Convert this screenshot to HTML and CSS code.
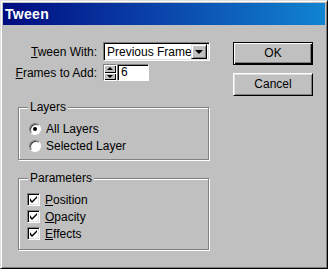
FILE: index.html
```html
<!DOCTYPE html>
<html lang="en">
<head>
    <meta charset="UTF-8">
    <title>Tween</title>
    <link rel="stylesheet" href="styles.css">
</head>
<body>
<div class="dlg">
    <div class="title">Tween</div>
    <div class="body">
        <div class="left">
            <div class="fields">
                <label class="lbl"><u>T</u>ween With:</label>
                <div class="combo">
                    <span class="combo-text">Previous Frame</span>
                    <span class="drop"><i class="tri-down"></i></span>
                </div>
                <label class="lbl"><u>F</u>rames to Add:</label>
                <div class="spin">
                    <div class="spin-btns">
                        <span class="sbtn"><i class="tri-up-s"></i></span>
                        <span class="sbtn"><i class="tri-down-s"></i></span>
                    </div>
                    <div class="num">6</div>
                </div>
            </div>

            <div class="group layers">
                <span class="group-title">Layers</span>
                <div class="opt"><span class="radio on"></span>All Layers</div>
                <div class="opt"><span class="radio"></span>Selected Layer</div>
            </div>

            <div class="group params">
                <span class="group-title">Parameters</span>
                <div class="opt"><span class="check"><svg width="7" height="7" viewBox="0 0 7 7"><path d="M0 2v3l2 2 5-5V0L2 5z" fill="#000"/></svg></span><u>P</u>osition</div>
                <div class="opt"><span class="check"><svg width="7" height="7" viewBox="0 0 7 7"><path d="M0 2v3l2 2 5-5V0L2 5z" fill="#000"/></svg></span><u>O</u>pacity</div>
                <div class="opt"><span class="check"><svg width="7" height="7" viewBox="0 0 7 7"><path d="M0 2v3l2 2 5-5V0L2 5z" fill="#000"/></svg></span><u>E</u>ffects</div>
            </div>
        </div>
        <div class="right">
            <div class="btn def">OK</div>
            <div class="btn">Cancel</div>
        </div>
    </div>
</div>
</body>
</html>
```

FILE: styles.css
```css
*{
    margin: 0;
    padding: 0;
    box-sizing: border-box;
}
body{
    background: #c0c0c0;
    font-family: "Liberation Sans", Arial, sans-serif;
    font-size: 12px;
    color: #000;
}
.dlg{
    width: 328px;
    height: 269px;
    padding: 2px;
    background: #c0c0c0;
    border: 1px solid;
    border-color: #dfdfdf #000 #000 #dfdfdf;
    box-shadow: inset 1px 1px #fff, inset -1px -1px #808080;
}
.title{
    height: 22px;
    line-height: 22px;
    padding-left: 2px;
    color: #fff;
    font-weight: bold;
    font-size: 14px;
    letter-spacing: 0.3px;
    background: linear-gradient(to right, #000c80 0%, #0a40a8 45%, #1084d0 100%);
}
.body{
    display: flex;
    padding: 17px 0 0 15px;
}
.left{
    width: 193px;
}
.fields{
    display: grid;
    grid-template-columns: 88px auto;
    row-gap: 3px;
    align-items: center;
    margin-left: -3px;
}
.lbl{
    text-align: right;
    padding-right: 6px;
    white-space: nowrap;
}
.combo{
    width: 107px;
    height: 19px;
    display: flex;
    align-items: center;
    background: #fff;
    border: 1px solid;
    border-color: #808080 #fff #fff #808080;
    box-shadow: inset 1px 1px #000, inset -1px -1px #dfdfdf;
    padding: 2px;
    overflow: hidden;
}
.combo-text{
    flex: 1;
    padding-left: 1px;
    white-space: nowrap;
    overflow: hidden;
    font-size: 12px;
}
.drop{
    width: 16px;
    height: 15px;
    flex: none;
    display: flex;
    align-items: center;
    justify-content: center;
    background: #c0c0c0;
    border: 1px solid;
    border-color: #dfdfdf #000 #000 #dfdfdf;
    box-shadow: inset 1px 1px #fff, inset -1px -1px #808080;
}
.tri-down{
    width: 0;
    height: 0;
    border-left: 4px solid transparent;
    border-right: 4px solid transparent;
    border-top: 4px solid #000;
}
.spin{
    display: flex;
    height: 17px;
}
.spin-btns{
    width: 14px;
    display: flex;
    flex-direction: column;
    border: 1px solid;
    border-color: #808080 #fff #fff #808080;
}
.sbtn{
    flex: 1;
    display: flex;
    align-items: center;
    justify-content: center;
    background: #c0c0c0;
    box-shadow: inset 1px 1px #fff, inset -1px -1px #000;
}
.tri-up-s{
    border-left: 3px solid transparent;
    border-right: 3px solid transparent;
    border-bottom: 3px solid #000;
}
.tri-down-s{
    border-left: 3px solid transparent;
    border-right: 3px solid transparent;
    border-top: 3px solid #000;
}
.num{
    width: 32px;
    background: #fff;
    border: 1px solid;
    border-color: #808080 #fff #fff #808080;
    box-shadow: inset 1px 1px #000;
    padding-left: 3px;
    line-height: 15px;
}
.group{
    position: relative;
    width: 191px;
    border: 1px solid #808080;
    box-shadow: 1px 1px 0 #fff, inset 1px 1px 0 #fff;
}
.group-title{
    position: absolute;
    left: 9px;
    top: -8px;
    padding: 0 2px;
    line-height: 14px;
    background: #c0c0c0;
}
.layers{
    margin-top: 26px;
    height: 53px;
    padding: 12px 0 0 9px;
}
.params{
    margin-top: 18px;
    height: 72px;
    padding: 12px 0 0 8px;
}
.opt{
    display: flex;
    align-items: center;
    height: 17px;
}
.radio{
    width: 12px;
    height: 12px;
    margin-right: 5px;
    border-radius: 50%;
    background: #fff;
    border: 1px solid;
    border-color: #808080 #fff #fff #808080;
    box-shadow: inset 1px 1px #404040;
    display: flex;
    align-items: center;
    justify-content: center;
}
.layers .opt{
    padding-left: 1px;
}
.radio.on::after{
    content: "";
    width: 4px;
    height: 4px;
    border-radius: 50%;
    background: #000;
}
.check{
    width: 13px;
    height: 13px;
    margin-right: 5px;
    background: #fff;
    border: 1px solid;
    border-color: #808080 #fff #fff #808080;
    box-shadow: inset 1px 1px #000, inset -1px -1px #dfdfdf;
    display: flex;
    align-items: center;
    justify-content: center;
}
.right{
    margin-left: 22px;
}
.btn{
    width: 80px;
    height: 23px;
    line-height: 21px;
    text-align: center;
    background: #c0c0c0;
    border: 1px solid;
    border-color: #fff #000 #000 #fff;
    box-shadow: inset 1px 1px #dfdfdf, inset -1px -1px #808080;
    margin-bottom: 8px;
}
.btn.def{
    border-color: #000;
    box-shadow: inset 1px 1px #fff, inset -1px -1px #000, inset -2px -2px #808080;
}
```
